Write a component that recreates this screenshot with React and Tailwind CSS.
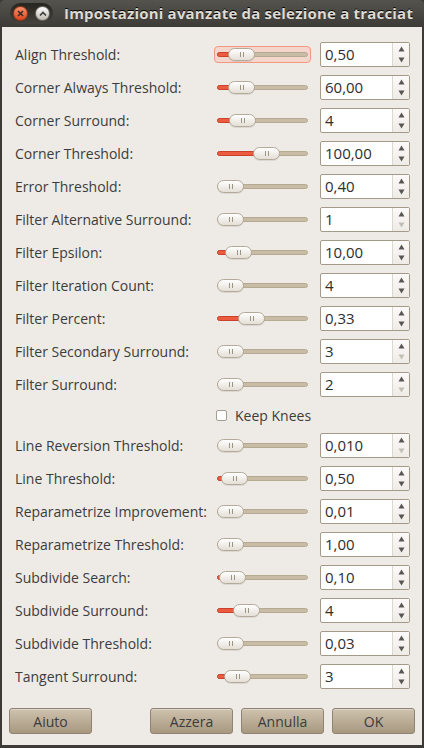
import React from "react";

const rows = [
  { label: "Align Threshold:", value: "0,50", pos: 11, focus: true },
  { label: "Corner Always Threshold:", value: "60,00", pos: 11 },
  { label: "Corner Surround:", value: "4", pos: 12 },
  { label: "Corner Threshold:", value: "100,00", pos: 36 },
  { label: "Error Threshold:", value: "0,40", pos: 0 },
  { label: "Filter Alternative Surround:", value: "1", pos: 0, atMin: true },
  { label: "Filter Epsilon:", value: "10,00", pos: 8 },
  { label: "Filter Iteration Count:", value: "4", pos: 0 },
  { label: "Filter Percent:", value: "0,33", pos: 21 },
  { label: "Filter Secondary Surround:", value: "3", pos: 0, atMin: true },
  { label: "Filter Surround:", value: "2", pos: 0, atMin: true },
];

const rows2 = [
  { label: "Line Reversion Threshold:", value: "0,010", pos: 0, atMin: true },
  { label: "Line Threshold:", value: "0,50", pos: 4 },
  { label: "Reparametrize Improvement:", value: "0,01", pos: 0 },
  { label: "Reparametrize Threshold:", value: "1,00", pos: 0 },
  { label: "Subdivide Search:", value: "0,10", pos: 2 },
  { label: "Subdivide Surround:", value: "4", pos: 16 },
  { label: "Subdivide Threshold:", value: "0,03", pos: 0 },
  { label: "Tangent Surround:", value: "3", pos: 7 },
];

const Slider = ({ pos, focus }) => (
  <div
    className={
      "flex items-center h-[17px] w-[97px] px-[2px] rounded-[4px] border " +
      (focus ? "border-[#f39882] bg-[#f4d6cc]" : "border-transparent")
    }
  >
    <div className="relative w-full h-[5px] rounded-full bg-[#c8bca6] border border-[#b6aa93]">
      {pos > 0 && (
        <div
          className="absolute -left-px -top-px h-[5px] rounded-full bg-[#ec5a3f] border border-[#c9432c]"
          style={{ width: pos + 6 }}
        />
      )}
      <div
        className="absolute top-[-5px] flex justify-center items-center gap-[2px] w-[27px] h-[13px] rounded-full border border-[#b3aa99] bg-gradient-to-b from-[#ffffff] to-[#e4dfd6] shadow-[0_1px_0_rgba(0,0,0,0.08)]"
        style={{ left: pos - 1 }}
      >
        <span className="w-px h-[5px] bg-[#9b9384]" />
        <span className="w-px h-[5px] bg-[#9b9384]" />
      </div>
    </div>
  </div>
);

const Spin = ({ value, atMin }) => (
  <div className="flex w-[90px] h-[25px] bg-white border border-[#a39a8a] rounded-[2px]">
    <div className="flex items-center flex-1 pl-[4px] text-[15px] text-[#2e2e2e]">
      {value}
    </div>
    <div className="flex flex-col justify-between items-center w-[17px] py-[3px] border-l border-[#ddd8cf] bg-gradient-to-b from-[#fbfaf8] to-[#efece7]">
      <svg width="7" height="6" viewBox="0 0 7 6">
        <path d="M3.5 0.5 L6.5 5.5 L0.5 5.5 Z" fill="#5a5752" />
      </svg>
      <svg width="7" height="6" viewBox="0 0 7 6">
        <path d="M0.5 0.5 L6.5 0.5 L3.5 5.5 Z" fill={atMin ? "#c4bfb6" : "#5a5752"} />
      </svg>
    </div>
  </div>
);

const Row = ({ r }) => (
  <div className="flex items-center h-[25px]">
    <div className="w-[199px] text-[14px] text-[#3c3c3c] whitespace-nowrap">{r.label}</div>
    <Slider pos={r.pos} focus={r.focus} />
    <div className="ml-[9px]">
      <Spin value={r.value} atMin={r.atMin} />
    </div>
  </div>
);

const Button = ({ children }) => (
  <button className="w-[83px] h-[26px] rounded-[3px] border border-[#8f8371] bg-gradient-to-b from-[#cfc2ae] to-[#a7987f] text-[14px] text-[#3c3c3c] shadow-[inset_0_1px_0_rgba(255,255,255,0.35)]">
    {children}
  </button>
);

export default function App() {
  return (
    <div
      className="flex flex-col w-[424px] h-[748px] bg-[#3c3b37] overflow-hidden"
      style={{ fontFamily: "'Open Sans', 'DejaVu Sans', sans-serif" }}
    >
      {/* Title bar */}
      <div className="flex items-center h-[27px] bg-gradient-to-b from-[#55534d] to-[#3c3b37] rounded-t-[5px]">
        <div className="flex items-center gap-[7px] ml-[10px] px-[3px] h-[21px] rounded-full bg-gradient-to-b from-[#26251f] to-[#46443f]">
          <div className="flex justify-center items-center w-[15px] h-[15px] rounded-full bg-gradient-to-b from-[#f6906a] to-[#d9461c] border border-[#9a3514]">
            <svg width="7" height="7" viewBox="0 0 7 7">
              <path d="M1 1 L6 6 M6 1 L1 6" stroke="#3a2a22" strokeWidth="1.6" />
            </svg>
          </div>
          <div className="flex justify-center items-center w-[15px] h-[15px] rounded-full bg-gradient-to-b from-[#ffffff] to-[#bdb9b1] border border-[#6f6c66]">
            <svg width="8" height="6" viewBox="0 0 8 6">
              <path d="M1 4.5 L4 1.5 L7 4.5" stroke="#3c3b37" strokeWidth="1.6" fill="none" />
            </svg>
          </div>
        </div>
        <div className="ml-[11px] w-[349px] overflow-hidden whitespace-nowrap font-bold text-[15px] tracking-[0.2px] text-[#dfdbd2] [text-shadow:0_-1px_0_#000]">
          Impostazioni avanzate da selezione a tracciato
        </div>
      </div>

      {/* Body */}
      <div className="flex flex-col flex-1 mx-[2px] mb-[3px] bg-[#eeebe6] pl-[13px] pt-[15px]">
        <div className="flex flex-col gap-[8px]">
          {rows.map((r) => (
            <Row key={r.label} r={r} />
          ))}
          <div className="flex items-center h-[20px] pl-[201px]">
            <div className="w-[11px] h-[11px] bg-white border border-[#a59e92] rounded-[2px]" />
            <span className="ml-[8px] text-[14px] text-[#3c3c3c]">Keep Knees</span>
          </div>
          {rows2.map((r) => (
            <Row key={r.label} r={r} />
          ))}
        </div>

        <div className="flex mt-[19px] -ml-[6px]">
          <Button>Aiuto</Button>
          <div className="flex gap-[8px] ml-[58px]">
            <Button>Azzera</Button>
            <Button>Annulla</Button>
            <Button>OK</Button>
          </div>
        </div>
      </div>
    </div>
  );
}
